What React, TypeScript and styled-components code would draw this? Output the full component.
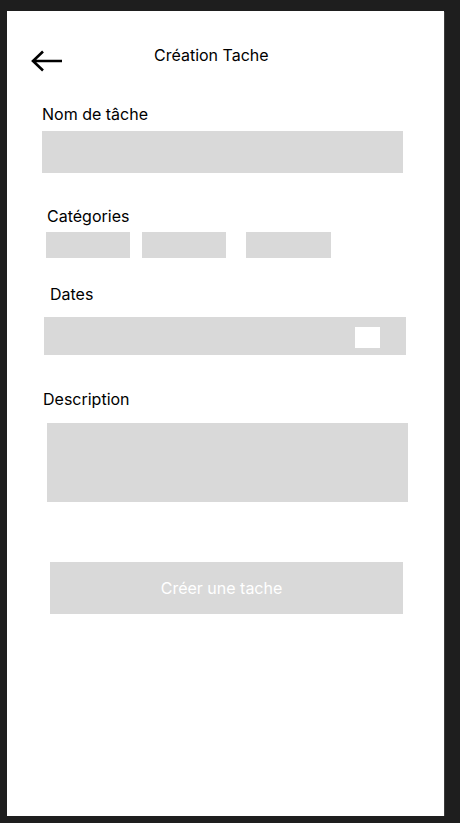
import React from "react";
import styled, { createGlobalStyle } from "styled-components";

const GlobalStyle = createGlobalStyle`
  html, body {
    margin: 0;
    padding: 0;
    background: #1e1e1e;
  }
  body {
    font-family: Inter, "Noto Sans", sans-serif;
  }
`;

const Screen = styled.div`
  width: 437px;
  height: 805px;
  margin: 11px 0 0 7px;
  background: #ffffff;
  box-shadow: 1px 1px 0 #3c3c3c;
  display: flex;
  flex-direction: column;
  overflow: hidden;
`;

const Header = styled.div`
  display: flex;
  align-items: flex-start;
  height: 26px;
  margin-top: 34px;
  padding-left: 24px;
`;

const BackButton = styled.button`
  border: 0;
  padding: 0;
  margin-top: 5px;
  background: transparent;
  width: 32px;
  height: 22px;
  display: flex;
  cursor: pointer;
`;

const Title = styled.h1`
  margin: 1px 0 0 91px;
  font-size: 16px;
  line-height: 19px;
  font-weight: 400;
  color: #000;
`;

const Label = styled.div<{ $left: number; $top: number }>`
  margin: ${(p) => p.$top}px 0 0 ${(p) => p.$left}px;
  font-size: 16px;
  line-height: 19px;
  color: #000;
`;

const Field = styled.div<{ $left: number; $top: number; $w: number; $h: number }>`
  margin: ${(p) => p.$top}px 0 0 ${(p) => p.$left}px;
  width: ${(p) => p.$w}px;
  height: ${(p) => p.$h}px;
  background: #d9d9d9;
  position: relative;
`;

const ChipRow = styled.div`
  display: flex;
  margin: 6px 0 0 39px;
`;

const Chip = styled.div<{ $gap: number; $w: number }>`
  width: ${(p) => p.$w}px;
  height: 26px;
  margin-left: ${(p) => p.$gap}px;
  background: #d9d9d9;
`;

const CalendarSlot = styled.div`
  position: absolute;
  left: 311px;
  top: 10px;
  width: 25px;
  height: 21px;
  background: #ffffff;
`;

const SubmitButton = styled.button`
  margin: 60px 0 0 43px;
  width: 353px;
  height: 52px;
  border: 0;
  padding: 0 10px 0 0;
  background: #d9d9d9;
  color: #ffffff;
  font-family: Inter, "Noto Sans", sans-serif;
  font-size: 16px;
  cursor: pointer;
`;

function ArrowLeft() {
  return (
    <svg width="32" height="22" viewBox="0 0 32 22" fill="none">
      <path
        d="M31 11H2M12 1.5L2 11L12 20.5"
        stroke="#000"
        strokeWidth="2.6"
        strokeLinejoin="miter"
      />
    </svg>
  );
}

export default function App() {
  return (
    <>
      <GlobalStyle />
      <Screen>
        <Header>
          <BackButton aria-label="Retour">
            <ArrowLeft />
          </BackButton>
          <Title>Création Tache</Title>
        </Header>

        <Label $left={35} $top={34}>Nom de tâche</Label>
        <Field $left={35} $top={7} $w={361} $h={42} />

        <Label $left={40} $top={34}>Catégories</Label>
        <ChipRow>
          <Chip $gap={0} $w={84} />
          <Chip $gap={12} $w={84} />
          <Chip $gap={20} $w={85} />
        </ChipRow>

        <Label $left={43} $top={27}>Dates</Label>
        <Field $left={37} $top={13} $w={362} $h={38}>
          <CalendarSlot />
        </Field>

        <Label $left={36} $top={35}>Description</Label>
        <Field $left={40} $top={14} $w={361} $h={79} />

        <SubmitButton>Créer une tache</SubmitButton>
      </Screen>
    </>
  );
}
